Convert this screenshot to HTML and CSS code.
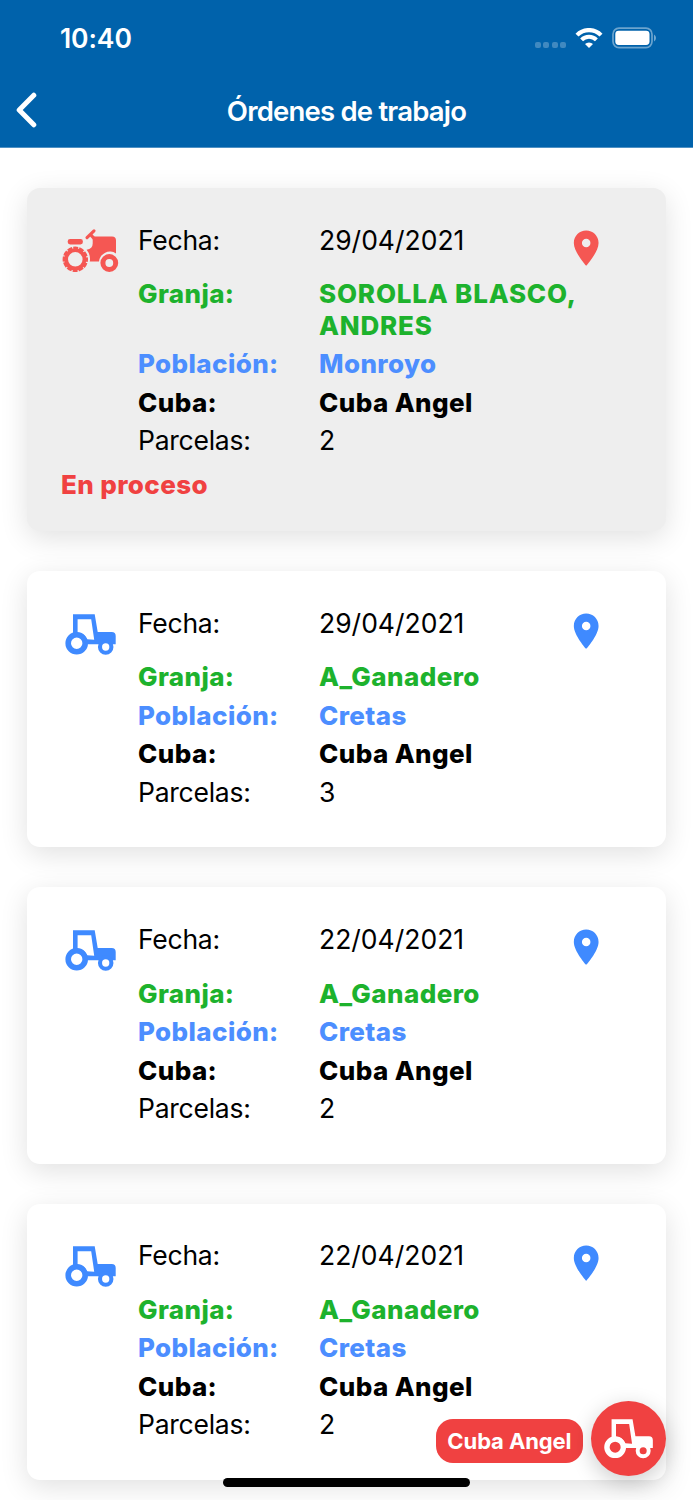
FILE: index.html
```
<!DOCTYPE html>
<html lang="es">
<head>
    <meta charset="UTF-8">
    <meta name="viewport" content="width=device-width, initial-scale=1.0">
    <title>Órdenes de trabajo</title>
    <link rel="stylesheet" href="styles.css">
</head>
<body>
    <!-- Shared icons -->
    <svg class="sprite" aria-hidden="true">
        <symbol id="tractor" viewBox="0 0 60 50">
            <path fill-rule="evenodd" d="M13 5.3H34.7L37.7 23H51.7Q55.7 23 55.7 27V35.2H51.2A6.3 6.3 0 0 0 40.2 35.2H25V34.3A8.5 8.5 0 0 0 13 26ZM17.6 10.3V23.5A11 11 0 0 1 27 30.2L34.2 30.7L31.2 10.3Z"/>
            <circle cx="16.7" cy="34.3" r="8.5" fill="none" stroke="currentColor" stroke-width="5.6"/>
            <circle cx="45.7" cy="38" r="5.7" fill="none" stroke="currentColor" stroke-width="4.1"/>
        </symbol>
        <symbol id="tractor-active" viewBox="0 0 60 50">
            <rect x="7.7" y="13" width="15.2" height="5.4" rx="2.4"/>
            <path d="M27 11.6L34 4.8M30.3 8.4L34 12.4" fill="none" stroke="currentColor" stroke-width="3.1" stroke-linecap="round"/>
            <path d="M32.7 10.6H52Q56 10.6 56 14.6V27.4A11 11 0 0 0 39 35.6H29.8A14.6 14.6 0 0 0 26.6 23.8Q32.7 23.1 32.7 17.6Z"/>
            <circle cx="15.3" cy="33.3" r="9.2" fill="none" stroke="currentColor" stroke-width="3.8"/>
            <circle cx="15.3" cy="33.3" r="11.4" fill="none" stroke="currentColor" stroke-width="2.6" stroke-dasharray="4.9 1.069" stroke-dashoffset="2.4"/>
            <circle cx="49.3" cy="37" r="6.4" fill="none" stroke="currentColor" stroke-width="5"/>
        </symbol>
        <symbol id="pin" viewBox="0 0 24 24">
            <path d="M12 2C8.13 2 5 5.13 5 9c0 5.25 7 13 7 13s7-7.75 7-13c0-3.87-3.13-7-7-7zm0 9.5a2.4 2.4 0 0 1 0-4.8 2.4 2.4 0 0 1 0 4.8z"/>
        </symbol>
    </svg>

    <header class="header">
        <div class="status-bar">
            <span class="time">10:40</span>
            <div class="status-icons">
                <span class="signal"><i></i><i></i><i></i><i></i></span>
                <svg class="wifi" viewBox="0 0 28 20">
                    <path d="M2 7.1A16.8 16.8 0 0 1 26 7.1" fill="none" stroke="#fff" stroke-width="4.2"/>
                    <path d="M6.6 11.9A10.3 10.3 0 0 1 21.4 11.9" fill="none" stroke="#fff" stroke-width="4"/>
                    <path d="M14 20L10 16A5.8 5.8 0 0 1 18 16Z" fill="#fff"/>
                </svg>
                <svg class="battery" viewBox="0 0 45 22">
                    <rect x="1" y="1.2" width="39" height="19.4" rx="6" fill="none" stroke="#fff" stroke-opacity=".42" stroke-width="1.7"/>
                    <rect x="3.3" y="3.7" width="34.2" height="14.3" rx="3.4" fill="#fff"/>
                    <path d="M42 7.4Q44 8.4 44 10.9T42 14.4Z" fill="#fff" fill-opacity=".45"/>
                </svg>
            </div>
        </div>
        <div class="nav-bar">
            <svg class="back" viewBox="0 0 22 36"><path d="M17.8 3.2L3.2 18L17.8 32.8"/></svg>
            <h1>Órdenes de trabajo</h1>
        </div>
    </header>

    <main class="orders">
        <article class="card in-progress">
            <div class="card-body">
                <svg class="tractor"><use href="#tractor-active"/></svg>
                <dl>
                    <div class="row date"><dt>Fecha:</dt><dd>29/04/2021</dd></div>
                    <div class="row farm"><dt>Granja:</dt><dd>SOROLLA BLASCO, ANDRES</dd></div>
                    <div class="row town"><dt>Población:</dt><dd>Monroyo</dd></div>
                    <div class="row tank"><dt>Cuba:</dt><dd>Cuba Angel</dd></div>
                    <div class="row"><dt>Parcelas:</dt><dd>2</dd></div>
                </dl>
                <svg class="pin"><use href="#pin"/></svg>
            </div>
            <p class="state">En proceso</p>
        </article>

        <article class="card">
            <div class="card-body">
                <svg class="tractor"><use href="#tractor"/></svg>
                <dl>
                    <div class="row date"><dt>Fecha:</dt><dd>29/04/2021</dd></div>
                    <div class="row farm"><dt>Granja:</dt><dd>A_Ganadero</dd></div>
                    <div class="row town"><dt>Población:</dt><dd>Cretas</dd></div>
                    <div class="row tank"><dt>Cuba:</dt><dd>Cuba Angel</dd></div>
                    <div class="row"><dt>Parcelas:</dt><dd>3</dd></div>
                </dl>
                <svg class="pin"><use href="#pin"/></svg>
            </div>
        </article>

        <article class="card">
            <div class="card-body">
                <svg class="tractor"><use href="#tractor"/></svg>
                <dl>
                    <div class="row date"><dt>Fecha:</dt><dd>22/04/2021</dd></div>
                    <div class="row farm"><dt>Granja:</dt><dd>A_Ganadero</dd></div>
                    <div class="row town"><dt>Población:</dt><dd>Cretas</dd></div>
                    <div class="row tank"><dt>Cuba:</dt><dd>Cuba Angel</dd></div>
                    <div class="row"><dt>Parcelas:</dt><dd>2</dd></div>
                </dl>
                <svg class="pin"><use href="#pin"/></svg>
            </div>
        </article>

        <article class="card">
            <div class="card-body">
                <svg class="tractor"><use href="#tractor"/></svg>
                <dl>
                    <div class="row date"><dt>Fecha:</dt><dd>22/04/2021</dd></div>
                    <div class="row farm"><dt>Granja:</dt><dd>A_Ganadero</dd></div>
                    <div class="row town"><dt>Población:</dt><dd>Cretas</dd></div>
                    <div class="row tank"><dt>Cuba:</dt><dd>Cuba Angel</dd></div>
                    <div class="row"><dt>Parcelas:</dt><dd>2</dd></div>
                </dl>
                <svg class="pin"><use href="#pin"/></svg>
            </div>
        </article>
    </main>

    <div class="fab-group">
        <span class="fab-label">Cuba Angel</span>
        <button class="fab" aria-label="Cuba Angel"><svg><use href="#tractor"/></svg></button>
    </div>
    <div class="home-indicator"></div>
</body>
</html>
```
FILE: styles.css
```
* {
    box-sizing: border-box;
}
body {
    margin: 0;
    height: 1500px;
    overflow: hidden;
    background: #fff;
    color: #000;
    font-family: Inter, "Liberation Sans", sans-serif;
    font-size: 26.5px;
    line-height: 31.6px;
}
svg {
    display: block;
    flex: none;
    fill: currentColor;
}
.sprite {
    position: absolute;
    width: 0;
    height: 0;
}

/* Header */
.header {
    height: 148px;
    background: #0062ab;
    border-bottom: 1px solid #4f91c4;
    color: #fff;
}
.status-bar {
    display: flex;
    justify-content: space-between;
    height: 76px;
    padding: 22px 36px 0 60px;
}
.time {
    font-weight: 600;
    font-size: 26.5px;
    letter-spacing: -0.1px;
    line-height: 33px;
}
.status-icons {
    display: flex;
    align-items: flex-start;
    padding-top: 5px;
}
.signal {
    display: flex;
    gap: 2.4px;
    margin: 15px 9px 0 0;
}
.signal i {
    width: 6px;
    height: 6px;
    border-radius: 2px;
    background: rgba(255, 255, 255, 0.25);
}
.wifi {
    width: 28px;
    height: 20px;
    margin: 1px 9px 0 0;
}
.battery {
    width: 45px;
    height: 22px;
}
.nav-bar {
    display: grid;
    grid-template-columns: 40px 1fr 40px;
    align-items: center;
    height: 71px;
    padding: 0 14px;
}
.back {
    width: 22px;
    height: 36px;
    margin: -3px 0 0 2px;
    fill: none;
    stroke: #fff;
    stroke-width: 5px;
    stroke-linecap: round;
    stroke-linejoin: round;
}
.nav-bar h1 {
    margin: 0;
    font-size: 27.5px;
    font-weight: 600;
    letter-spacing: -0.8px;
    text-align: center;
}

/* Orders */
.orders {
    display: flex;
    flex-direction: column;
    gap: 40px;
    padding: 40px 27px 0;
}
.card {
    flex: none;
    height: 276.3px;
    padding: 33px 34px;
    border-radius: 13px;
    background: #fff;
    box-shadow: 0 7px 28px rgba(0, 0, 0, 0.12);
}
.card-body {
    display: flex;
    align-items: flex-start;
    color: #3f8aff;
}
.tractor {
    width: 60px;
    height: 50px;
    margin: 4.5px 18px 0 -1px;
}
dl {
    width: 445px;
    margin: 0;
    padding-top: 0.4px;
    color: #000;
    letter-spacing: -0.25px;
}
.row {
    display: flex;
    padding: 3.45px 0;
}
.row dt {
    width: 181px;
}
.row dd {
    flex: 1;
    margin: 0;
}
.date {
    margin-bottom: 15px;
}
.date dd {
    letter-spacing: 0;
}
.farm,
.town,
.tank,
.state {
    font-size: 26px;
    font-weight: 800;
    letter-spacing: 0.4px;
}
.farm {
    color: #1db22d;
}
.town {
    color: #4c8eff;
}
.pin {
    width: 42.4px;
    height: 42.4px;
    margin: 5.6px 0 0 -18.5px;
}
.in-progress {
    height: 343px;
    background: #eee;
}
.in-progress .card-body {
    color: #f55753;
}
.in-progress .farm dd {
    letter-spacing: 0.8px;
}
.state {
    margin: 8.4px 0 0;
    color: #f04141;
}

/* Floating button */
.fab-group {
    position: fixed;
    right: 27px;
    bottom: 24px;
    display: flex;
    align-items: center;
    gap: 8.5px;
}
.fab-label {
    height: 44px;
    margin-top: 5px;
    padding: 0 11px;
    border-radius: 17px;
    background: #f04141;
    color: #fff;
    font-size: 22px;
    font-weight: 700;
    letter-spacing: -0.1px;
    line-height: 44px;
}
.fab {
    display: flex;
    width: 75px;
    height: 75px;
    padding: 13px 0 0 8px;
    border: none;
    border-radius: 50%;
    background: #f04141;
    color: #fff;
    box-shadow: 0 6px 22px rgba(0, 0, 0, 0.2);
}
.fab svg {
    width: 58px;
    height: 48.4px;
}
.home-indicator {
    position: fixed;
    left: 223px;
    bottom: 13.5px;
    width: 247px;
    height: 8.5px;
    border-radius: 5px;
    background: #000;
}
```
